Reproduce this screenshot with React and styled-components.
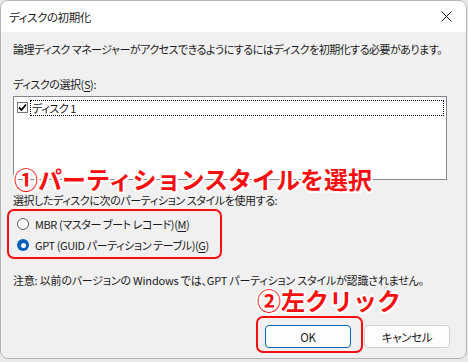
import React from "react";
import styled, { createGlobalStyle } from "styled-components";

const Global = createGlobalStyle`
  html, body { margin: 0; padding: 0; background: #e9e9e9; }
  body { font-family: "Noto Sans CJK JP", "Noto Sans", sans-serif; }
  #root { width: 468px; height: 362px; }
`;

const Win = styled.div`
  position: relative;
  width: 465px;
  height: 357px;
  border: 1px solid #b4b4b4;
  border-radius: 8px;
  overflow: hidden;
  background: #f0f0f0;
  display: flex;
  flex-direction: column;
  font-size: 11px;
  letter-spacing: -0.4px;
  color: #1a1a1a;
  box-sizing: content-box;
  font-feature-settings: "palt";
`;

const TitleBar = styled.div`
  height: 31px;
  background: #ffffff;
  display: flex;
  align-items: center;
  justify-content: space-between;
  padding: 0 14px 0 8px;
  flex-shrink: 0;
`;

const Title = styled.span`
  font-size: 11.5px;
  line-height: 16px;
`;

const Body = styled.div`
  display: flex;
  flex-direction: column;
  padding: 9px 16px 0 12px;
  flex: 1;
`;

const Line = styled.div`
  line-height: 16px;
  height: 16px;
  white-space: nowrap;
  margin-top: ${(p) => p.$mt || 0}px;
  letter-spacing: ${(p) => (p.$ls !== undefined ? p.$ls : -0.4)}px;
`;

const U = styled.span`
  text-decoration: underline;
  text-underline-offset: 2px;
`;

const ListBox = styled.div`
  margin-top: 4px;
  width: 434px;
  border: 1px solid #828790;
  background: #fff;
  padding: 2px;
  box-sizing: border-box;
  height: 84px;
`;

const ListItem = styled.div`
  display: flex;
  align-items: center;
  height: 17px;
  gap: 2px;
`;

const Check = styled.div`
  width: 11px;
  height: 11px;
  border: 1px solid #7a7a7a;
  background: #fff;
  display: flex;
  align-items: center;
  justify-content: center;
  box-sizing: border-box;
  margin-left: 1px;
`;

const FocusLabel = styled.div`
  flex: 1;
  height: 16px;
  line-height: 15px;
  border: 1px dotted #000;
  padding-left: 1px;
  box-sizing: border-box;
`;

const RadioGroup = styled.div`
  margin-top: 6px;
  display: flex;
  flex-direction: column;
  gap: 1px;
`;

const RadioRow = styled.div`
  display: flex;
  align-items: center;
  height: 20px;
  gap: 6px;
  padding-left: 4px;
  white-space: nowrap;
`;

const Radio = styled.span`
  width: 12px;
  height: 12px;
  border-radius: 50%;
  box-sizing: border-box;
  border: ${(p) => (p.$on ? "none" : "1px solid #5a5a5a")};
  background: ${(p) => (p.$on ? "#005fb8" : "#fff")};
  display: flex;
  align-items: center;
  justify-content: center;
  &::after {
    content: "";
    display: ${(p) => (p.$on ? "block" : "none")};
    width: 5px;
    height: 5px;
    border-radius: 50%;
    background: #fff;
  }
`;

const Buttons = styled.div`
  margin-top: 37px;
  display: flex;
  justify-content: flex-end;
  gap: 13px;
`;

const Button = styled.button`
  width: 86px;
  height: 23px;
  background: #fdfdfd;
  border: 1px solid ${(p) => (p.$primary ? "#0067c0" : "#d0d0d0")};
  border-radius: 4px;
  font-family: "Noto Sans CJK JP", "Noto Sans", sans-serif;
  font-feature-settings: "palt";
  font-size: 11.5px;
  letter-spacing: -0.3px;
  color: #1a1a1a;
  padding: 0;
  line-height: 16px;
`;

const Note = styled.div`
  position: absolute;
  left: ${(p) => p.$x}px;
  top: ${(p) => p.$y}px;
  font-family: "Noto Sans CJK JP", sans-serif;
  font-feature-settings: normal;
  font-weight: 700;
  font-size: ${(p) => p.$size}px;
  line-height: 1;
  color: #f70f0f;
  letter-spacing: 0;
  white-space: nowrap;
  text-shadow:
    2px 0 0 #fff, -2px 0 0 #fff, 0 2px 0 #fff, 0 -2px 0 #fff,
    1.5px 1.5px 0 #fff, -1.5px -1.5px 0 #fff, 1.5px -1.5px 0 #fff, -1.5px 1.5px 0 #fff;
`;

const Highlight = styled.div`
  position: absolute;
  left: ${(p) => p.$x}px;
  top: ${(p) => p.$y}px;
  width: ${(p) => p.$w}px;
  height: ${(p) => p.$h}px;
  border: 2.5px solid #f70f0f;
  border-radius: 7px;
  box-sizing: border-box;
  pointer-events: none;
`;

export default function App() {
  return (
    <>
      <Global />
      <Win>
        <TitleBar>
          <Title>ディスクの初期化</Title>
          <svg width="11" height="11" viewBox="0 0 11 11">
            <path d="M0.5 0.5 L10.5 10.5 M10.5 0.5 L0.5 10.5" stroke="#1a1a1a" strokeWidth="1" />
          </svg>
        </TitleBar>
        <Body>
          <Line $ls={-0.5}>論理ディスク マネージャーがアクセスできるようにするにはディスクを初期化する必要があります。</Line>
          <Line $mt={19}>
            ディスクの選択(<U>S</U>):
          </Line>
          <ListBox>
            <ListItem>
              <Check>
                <svg width="9" height="9" viewBox="0 0 9 9">
                  <path d="M1 4.5 L3.5 7 L8 1.5" stroke="#000" strokeWidth="1.8" fill="none" />
                </svg>
              </Check>
              <FocusLabel>ディスク 1</FocusLabel>
            </ListItem>
          </ListBox>
          <Line $mt={12}>選択したディスクに次のパーティション スタイルを使用する:</Line>
          <RadioGroup>
            <RadioRow>
              <Radio />
              <span>
                MBR (マスター ブート レコード)(<U>M</U>)
              </span>
            </RadioRow>
            <RadioRow>
              <Radio $on />
              <span>
                GPT (GUID パーティション テーブル)(<U>G</U>)
              </span>
            </RadioRow>
          </RadioGroup>
          <Line $mt={17} $ls={-0.2}>注意: 以前のバージョンの Windows では、GPT パーティション スタイルが認識されません。</Line>
          <Buttons>
            <Button $primary>OK</Button>
            <Button>キャンセル</Button>
          </Buttons>
        </Body>
        <Highlight $x={6} $y={208} $w={215} $h={50} />
        <Highlight $x={255} $y={315} $w={107} $h={37} />
        <Note $x={13} $y={166} $size={24}>①パーティションスタイルを選択</Note>
        <Note $x={256} $y={287} $size={24}>②左クリック</Note>
      </Win>
    </>
  );
}
